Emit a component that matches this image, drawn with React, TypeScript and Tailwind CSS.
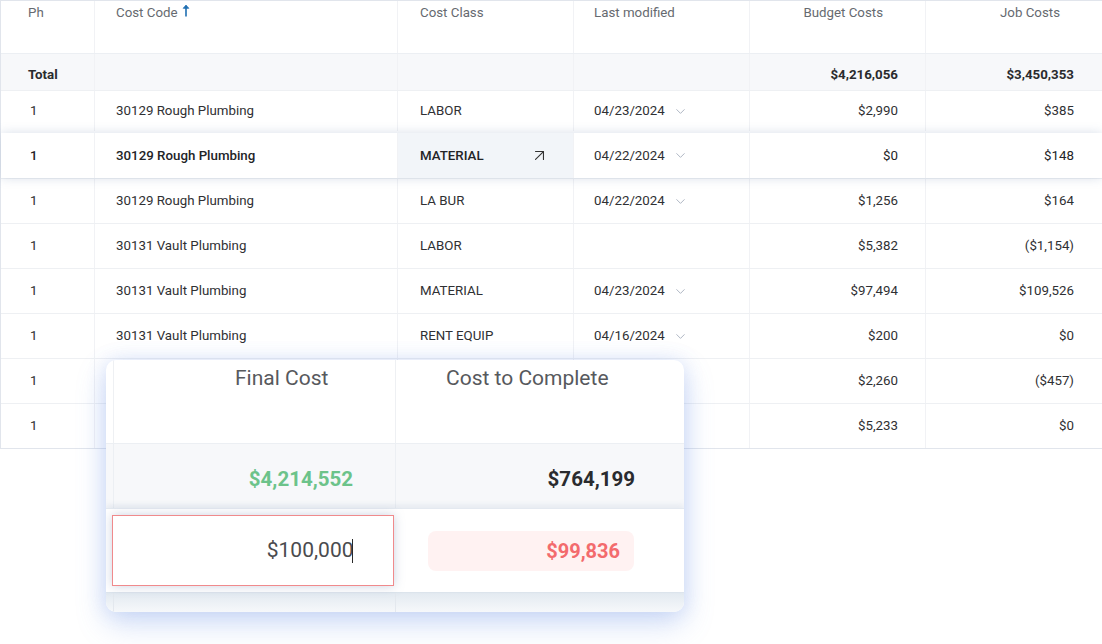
import React from "react";
import { ArrowUpRight, ChevronDown } from "lucide-react";

type Row = {
  ph: string;
  code: string;
  cls: string;
  date: string;
  budget: string;
  job: string;
  active?: boolean;
};

const rows: Row[] = [
  { ph: "1", code: "30129 Rough Plumbing", cls: "LABOR", date: "04/23/2024", budget: "$2,990", job: "$385" },
  { ph: "1", code: "30129 Rough Plumbing", cls: "MATERIAL", date: "04/22/2024", budget: "$0", job: "$148", active: true },
  { ph: "1", code: "30129 Rough Plumbing", cls: "LA BUR", date: "04/22/2024", budget: "$1,256", job: "$164" },
  { ph: "1", code: "30131 Vault Plumbing", cls: "LABOR", date: "", budget: "$5,382", job: "($1,154)" },
  { ph: "1", code: "30131 Vault Plumbing", cls: "MATERIAL", date: "04/23/2024", budget: "$97,494", job: "$109,526" },
  { ph: "1", code: "30131 Vault Plumbing", cls: "RENT EQUIP", date: "04/16/2024", budget: "$200", job: "$0" },
  { ph: "1", code: "", cls: "", date: "", budget: "$2,260", job: "($457)" },
  { ph: "1", code: "", cls: "", date: "", budget: "$5,233", job: "$0" },
];

function SortUp() {
  return (
    <svg width="8" height="13" viewBox="0 0 8 13" className="ml-[4px] mt-[1px]">
      <path d="M4 12.5V1.5" stroke="#1f6fb2" strokeWidth="1.6" />
      <path d="M1.2 4.3L4 1.2L6.8 4.3Z" fill="#1f6fb2" stroke="#1f6fb2" strokeWidth="0.8" strokeLinejoin="round" />
    </svg>
  );
}

const cellLine = "border-r border-[#f1f2f5]";

export default function App() {
  return (
    <div
      className="relative w-[1102px] h-[644px] bg-white overflow-hidden text-[13.3px] text-[#2f3033]"
      style={{ fontFamily: "Roboto, 'Liberation Sans', sans-serif" }}
    >
      {/* Table */}
      <div className="w-[1102px] border-l border-t border-b border-[#e1e5ec] flex flex-col">
        {/* Header */}
        <div className="flex h-[52px] text-[#666a70]">
          <div className={`w-[94px] ${cellLine} pl-[27px] pt-[2px]`}>Ph</div>
          <div className={`w-[303px] ${cellLine} pl-[21px] pt-[2px] flex items-start`}>
            <span>Cost Code</span>
            <SortUp />
          </div>
          <div className={`w-[176px] ${cellLine} pl-[22px] pt-[2px]`}>Cost Class</div>
          <div className={`w-[176px] ${cellLine} pl-[20px] pt-[2px]`}>Last modified</div>
          <div className={`w-[176px] ${cellLine} pr-[42px] pt-[2px] text-right`}>Budget Costs</div>
          <div className="w-[176px] pr-[42px] pt-[2px] text-right">Job Costs</div>
        </div>
        {/* Total */}
        <div className="flex h-[37px] bg-[#f7f8fa] border-t border-[#eceff3] font-bold text-[#2a2b2e] items-center">
          <div className={`w-[94px] h-full ${cellLine} pl-[27px] flex items-center pt-[5px]`}>Total</div>
          <div className={`w-[303px] h-full ${cellLine}`} />
          <div className={`w-[176px] h-full ${cellLine}`} />
          <div className={`w-[176px] h-full ${cellLine}`} />
          <div className={`w-[176px] h-full ${cellLine} pr-[27px] flex items-center justify-end pt-[5px]`}>$4,216,056</div>
          <div className="w-[176px] h-full pr-[28px] flex items-center justify-end pt-[5px]">$3,450,353</div>
        </div>
        {/* Rows */}
        {rows.map((r, i) => (
          <div
            key={i}
            className={`flex ${i === 0 ? "h-[43px] pb-[2px]" : "h-[45px]"} items-stretch ${
              r.active
                ? "relative z-10 bg-white shadow-[0_0_10px_rgba(120,145,180,0.28)]"
                : "border-t border-[#eef0f3]"
            } ${r.active ? "font-medium text-[#232427]" : ""}`}
          >
            <div className={`w-[94px] ${cellLine} pl-[29px] flex items-center`}>{r.ph}</div>
            <div className={`w-[303px] ${cellLine} pl-[21px] flex items-center`}>{r.code}</div>
            <div
              className={`w-[176px] ${cellLine} pl-[22px] pr-[24px] flex items-center justify-between ${
                r.active ? "bg-[#f2f5f9]" : ""
              }`}
            >
              <span>{r.cls}</span>
              {r.active && <ArrowUpRight size={19} strokeWidth={1.4} color="#333" />}
            </div>
            <div className={`w-[176px] ${cellLine} pl-[20px] flex items-center font-normal text-[#2f3033]`}>
              {r.date && (
                <>
                  <span>{r.date}</span>
                  <ChevronDown size={15} strokeWidth={1.4} color="#a3abba" className="ml-[8px]" />
                </>
              )}
            </div>
            <div className={`w-[176px] ${cellLine} pr-[27px] flex items-center justify-end font-normal`}>{r.budget}</div>
            <div className="w-[176px] pr-[28px] flex items-center justify-end font-normal">{r.job}</div>
          </div>
        ))}
      </div>

      {/* Floating panel */}
      <div className="absolute left-[106px] top-[360px] w-[578px] h-[252px] rounded-[10px] overflow-hidden bg-white shadow-[0_12px_30px_rgba(95,135,225,0.28),0_0_20px_rgba(95,135,225,0.18)] flex flex-col">
        {/* header */}
        <div className="flex h-[83px] text-[21px] text-[#57595d]">
          <div className="w-[8px] border-r border-[#eef0f3]" />
          <div className="w-[282px] border-r border-[#eef0f3] pl-[121px] pt-[3px]">Final Cost</div>
          <div className="flex-1 pl-[50px] pt-[3px]">Cost to Complete</div>
        </div>
        {/* totals */}
        <div className="flex h-[65px] bg-[#f7f8fa] border-t border-[#eceff3] text-[20.5px] font-bold items-stretch">
          <div className="w-[8px] border-r border-[#eceff3]" />
          <div className="w-[282px] border-r border-[#eceff3] pr-[42px] pt-[6px] flex items-center justify-end text-[#6cc38a]">
            $4,214,552
          </div>
          <div className="flex-1 pr-[49px] pt-[6px] flex items-center justify-end text-[#2a2b2e]">$764,199</div>
        </div>
        {/* edit row */}
        <div className="relative flex h-[84px] items-center border-t border-[#e4e9f0] shadow-[0_-3px_6px_rgba(150,170,200,0.18)] bg-white">
          <div className="ml-[6px] w-[282px] h-[71px] border-[1.5px] border-[#f08a8c] bg-white shadow-[0_0_10px_rgba(110,130,170,0.35)] flex items-center justify-end pr-[40px] text-[21px] text-[#4a4b4e]">
            <span>$100,000</span>
            <span className="inline-block w-[1.5px] h-[24px] bg-[#2a2a2a] -ml-[2px]" />
          </div>
          <div className="ml-[34px] w-[206px] h-[40px] rounded-[8px] bg-[#fff2f2] flex items-center justify-end pr-[14px] text-[20px] font-bold text-[#f36b6d]">
            $99,836
          </div>
        </div>
        {/* bottom strip */}
        <div className="flex flex-1 bg-gradient-to-b from-[#e3eaf1] to-[#f6f8fa] border-t border-[#dfe6ee]">
          <div className="w-[8px] border-r border-[#e3e8ee]" />
          <div className="w-[282px] border-r border-[#e3e8ee]" />
          <div className="flex-1" />
        </div>
      </div>
    </div>
  );
}
